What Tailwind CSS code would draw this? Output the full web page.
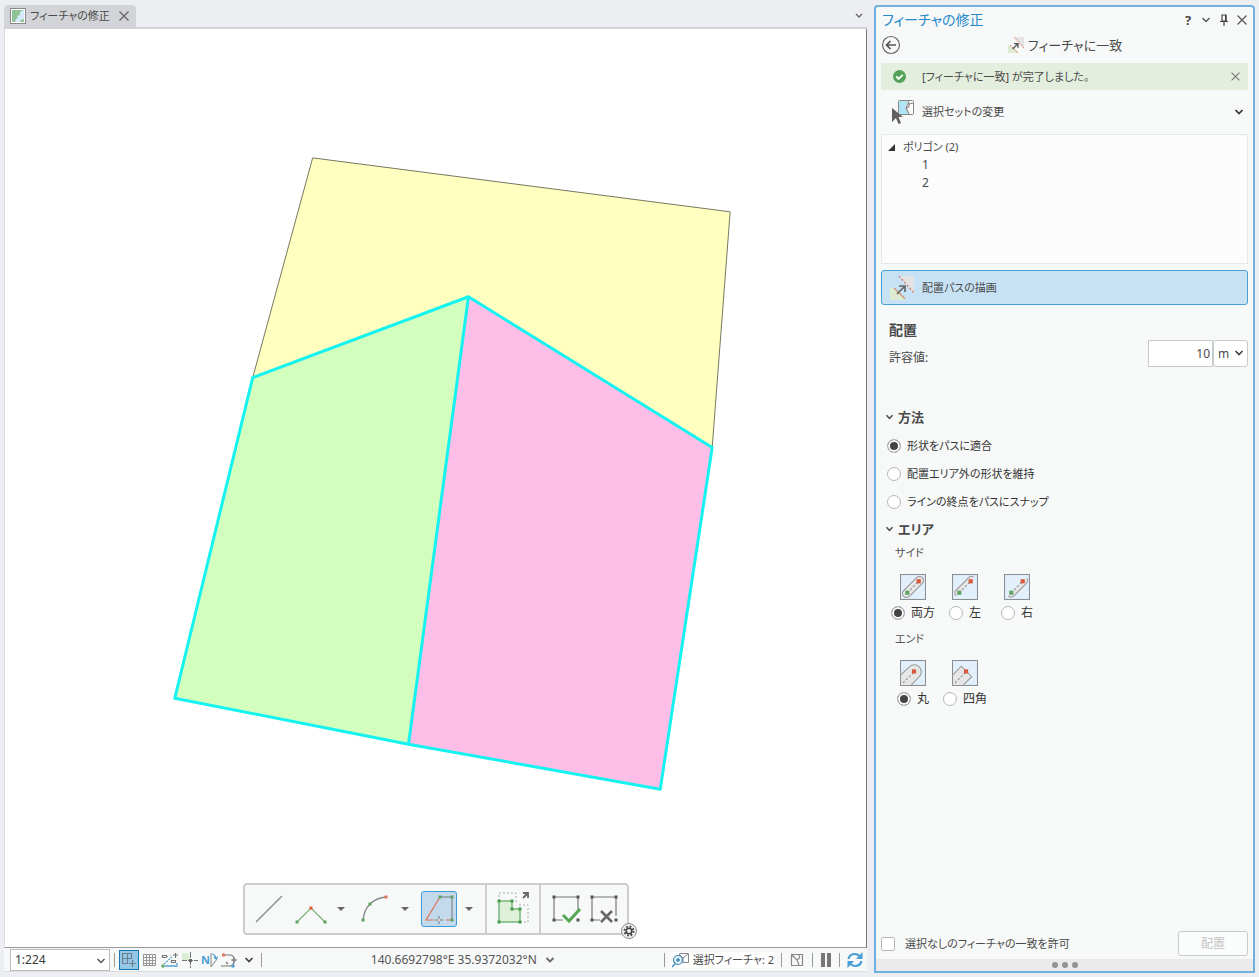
<!DOCTYPE html>
<html lang="ja">
<head>
    <meta charset="UTF-8">
    <meta name="viewport" content="width=device-width, initial-scale=1.0">
    <title>フィーチャの修正</title>
    <script src="https://cdn.jsdelivr.net/npm/@tailwindcss/browser@4"></script>
</head>
<body class="h-screen min-h-[760px] flex gap-[7px] bg-[#edeef1] pl-1 pr-1 pt-[5px] pb-1 overflow-hidden font-['Noto_Sans','Noto_Sans_CJK_JP',sans-serif] [font-feature-settings:'palt'] text-[12px] leading-4 text-[#4a4a4a]">

    <!-- マップビュー -->
    <main class="flex-1 min-w-0 flex flex-col pb-[1px]">
        <div class="h-6 shrink-0 flex items-end justify-between border-b-2 border-[#d2d4d8]">
            <div class="h-full flex items-center gap-1 bg-[#d2d4d8] rounded-t px-[6px]">
                <svg class="size-4" viewBox="0 0 16 16">
                    <rect x=".5" y=".5" width="15" height="15" fill="#fff" stroke="#8a8a8a"/>
                    <path d="M2 2h12v12H2z" fill="#8fc397"/>
                    <path d="M14 2v9l-3 1-1 2H5l1-3 2-1-1-2 3-1 0-3 2-1V2z" fill="#d3eafa"/>
                </svg>
                <span class="text-[11px] leading-4">フィーチャの修正</span>
                <button class="ml-1" aria-label="閉じる">
                    <svg class="size-3" viewBox="0 0 12 12"><path d="M1.500 1.500l9 9M10.500 1.500l-9 9" stroke="#666" stroke-width="1.300"/></svg>
                </button>
            </div>
            <button class="self-center mr-1" aria-label="ビューの一覧">
                <svg class="w-2 h-[6px]" viewBox="0 0 8 6"><path d="M1 1l3 3 3-3" fill="none" stroke="#666" stroke-width="1.300"/></svg>
            </button>
        </div>

        <div class="relative flex-1 min-h-0 bg-white border-l border-l-[#dcdde0] border-r border-r-[#777] border-b border-b-[#999]">
            <svg class="block w-full h-full" viewBox="5 28 862 919">
                <polygon points="313,157 731,211 713,447 469,296 253,377" fill="#ffffc0" stroke="#777760"/>
                <polygon points="469,296 253,377 175,698 409,744" fill="#d2ffbd"/>
                <polygon points="469,296 713,447 661,789 409,744" fill="#ffbee8"/>
                <path d="M469 296L253 377 175 698 409 744 661 789 713 447zL409 744" fill="none" stroke="#16f2f0" stroke-width="3" stroke-linejoin="round"/>
            </svg>

            <!-- 作図ツールバー -->
            <div class="absolute bottom-3 left-1/2 -translate-x-1/2 h-[52px] flex items-center bg-[#f7f9f8] border-2 border-[#cdcdcd] rounded">
                <div class="h-full flex items-center border-r-2 border-[#cdcdcd] pl-2 pr-3">
                    <button class="mr-2" aria-label="ライン">
                        <svg class="size-8" viewBox="0 0 32 32"><path d="M3 29L29 3" stroke="#888" stroke-width="1.200"/></svg>
                    </button>
                    <button class="mr-2" aria-label="頂点">
                        <svg class="w-9 h-8" viewBox="0 0 36 32">
                            <path d="M4 29L18 15 32 29" fill="none" stroke="#79ae79" stroke-width="1.200"/>
                            <path d="M2.500 27.500h3v3h-3zM30.500 27.500h3v3h-3z" fill="#5fa463"/><path d="M16.500 13.500h3v3h-3z" fill="#e8572b"/>
                        </svg>
                    </button>
                    <button class="mr-3" aria-label="頂点のオプション"><svg class="w-2 h-1" viewBox="0 0 8 4"><path d="M0 0h8L4 4z" fill="#666"/></svg></button>
                    <button class="mr-2" aria-label="円弧">
                        <svg class="w-9 h-8" viewBox="0 0 36 32">
                            <path d="M6 27Q7 17 13 11 19 5 29 4" fill="none" stroke="#888" stroke-width="1.300"/>
                            <path d="M4.500 25.500h3v3h-3zM11.500 9.500h3v3h-3z" fill="#5fa463"/><path d="M27.500 2.500h3v3h-3z" fill="#d9775a"/>
                        </svg>
                    </button>
                    <button class="mr-3" aria-label="円弧のオプション"><svg class="w-2 h-1" viewBox="0 0 8 4"><path d="M0 0h8L4 4z" fill="#666"/></svg></button>
                    <button class="mr-2 size-9 flex items-center justify-center bg-[#c3d9ec] border border-[#3f9bd8] rounded-[3px]" aria-label="トレース">
                        <svg class="w-8 h-8" viewBox="0 0 32 32">
                            <path d="M17 4h12v23" fill="none" stroke="#777"/>
                            <path d="M17 4L3 27h8M23 27h5" fill="none" stroke="#d9775a" stroke-width="1.200"/>
                            <path d="M16 23v8M12 27h8" stroke="#777"/><circle cx="16" cy="27" r="1" fill="#fff"/>
                            <path d="M15.500 2.500h3v3h-3zM27.500 2.500h3v3h-3zM27.500 25.500h3v3h-3z" fill="#5fa463"/>
                        </svg>
                    </button>
                    <button aria-label="トレースのオプション"><svg class="w-2 h-1" viewBox="0 0 8 4"><path d="M0 0h8L4 4z" fill="#666"/></svg></button>
                </div>
                <div class="h-full flex items-center border-r-2 border-[#cdcdcd] px-2">
                    <button aria-label="フィーチャの追加">
                        <svg class="w-9 h-9" viewBox="0 0 36 36">
                            <path d="M4 10V2h17v10M24 14h9v17h-8" fill="none" stroke="#aaa" stroke-dasharray="2 2"/>
                            <path d="M4 10h13v8h8v13H4z" fill="#def0d8" stroke="#79b67c" stroke-width="1.500"/>
                            <path d="M2.500 8.500h3v3h-3zM15.500 8.500h3v3h-3zM15.500 16.500h3v3h-3zM23.500 16.500h3v3h-3zM2.500 29.500h3v3h-3zM23.500 29.500h3v3h-3z" fill="#489a4e"/>
                            <path d="M28 7l4-4M28 2h5v5" fill="none" stroke="#666" stroke-width="1.800"/>
                        </svg>
                    </button>
                </div>
                <div class="h-full flex items-center gap-1 pl-2 pr-[6px]">
                    <button aria-label="完了">
                        <svg class="w-9 h-8" viewBox="0 0 36 32">
                            <path d="M14 27H5V4h24v13" fill="none" stroke="#777" stroke-width="1.200"/>
                            <path d="M3.500 2.500h3v3h-3zM27.500 2.500h3v3h-3zM3.500 25.500h3v3h-3zM27.500 25.500h3v3h-3z" fill="#555"/>
                            <path d="M14 22l6 6 11-12" fill="none" stroke="#55a657" stroke-width="3"/>
                        </svg>
                    </button>
                    <button aria-label="クリア">
                        <svg class="w-8 h-8" viewBox="0 0 32 32">
                            <path d="M11 27H3V4h24v19" fill="none" stroke="#777" stroke-width="1.200"/>
                            <path d="M1.500 2.500h3v3h-3zM25.500 2.500h3v3h-3zM1.500 25.500h3v3h-3zM25.500 25.500h3v3h-3z" fill="#555"/>
                            <path d="M12 18l11 11M23 18L12 29" stroke="#666" stroke-width="2.500"/>
                        </svg>
                    </button>
                </div>
                <button class="absolute -right-[10px] -bottom-[6px]" aria-label="設定">
                    <svg class="size-4" viewBox="0 0 16 16">
                        <circle cx="8" cy="8" r="7.500" fill="#f2f2f2" stroke="#888"/>
                        <circle cx="8" cy="8" r="4.500" fill="none" stroke="#444" stroke-width="2" stroke-dasharray="1.800 1.734"/>
                        <circle cx="8" cy="8" r="2.800" fill="none" stroke="#444" stroke-width="1.600"/>
                    </svg>
                </button>
            </div>
        </div>

        <!-- ステータスバー -->
        <div class="h-6 shrink-0 flex items-center justify-between bg-[#f7f9f8] border-b border-[#dcdde0] pl-[6px] pr-1">
            <div class="flex items-center gap-[3px]">
                <div class="relative">
                    <select class="appearance-none block w-[100px] h-[22px] bg-white border border-[#bcbcbc] pl-1 text-[#3a3a3a]" aria-label="縮尺"><option>1:224</option></select>
                    <svg class="absolute right-1 top-2 w-[10px] h-2 pointer-events-none" viewBox="0 0 10 8"><path d="M1.500 2L5 5.500 8.500 2" fill="none" stroke="#555" stroke-width="1.500"/></svg>
                </div>
                <span class="w-px h-[14px] bg-[#999] mx-px"></span>
                <button class="size-5 flex items-center justify-center bg-[#94c8e8] border border-[#1672ac]" aria-label="スナップ">
                    <svg class="size-4" viewBox="0 0 16 16"><path d="M1.500 1.500h5v5h-5zM6.500 1.500h4v5h-4M1.500 6.500v5h5v-5M11.500 8v7M8 11.500h7" fill="none" stroke="#6f7f8c" stroke-width="1.200"/></svg>
                </button>
                <button aria-label="グリッド">
                    <svg class="size-4" viewBox="0 0 16 16"><path d="M1.500 2.500h12v11h-12zM4.500 2v12M7.500 2v12M10.500 2v12M1 5.500h12M1 8.500h12M1 11.500h12" fill="none" stroke="#999"/></svg>
                </button>
                <button aria-label="計測">
                    <svg class="w-[18px] h-4" viewBox="0 0 18 16">
                        <path d="M4 14h12v-3" fill="none" stroke="#57a4d8" stroke-width="1.300"/><path d="M3 12L11 5" stroke="#57a4d8" stroke-width="1.300" stroke-dasharray="2 1"/>
                        <path d="M1.500 3.500h4v2h-4zM10.500 8.500h4v2h-4zM12 3h5M14.500 1v5" fill="none" stroke="#777" stroke-width="1.200"/><path d="M5 6l2-2M9 3h1" stroke="#aaa"/>
                        <circle cx="2" cy="14" r="1.700" fill="#5fa463"/>
                    </svg>
                </button>
                <button aria-label="制約">
                    <svg class="size-4" viewBox="0 0 16 16"><path d="M0 1h7v7H0z" fill="#d9edd3"/><path d="M0 8.500h16" stroke="#777" stroke-dasharray="5 1"/><path d="M8.500 0v16" stroke="#777" stroke-dasharray="6 1"/><path d="M7 7h3v3H7z" fill="#666"/></svg>
                </button>
                <button class="flex items-center" aria-label="北">
                    <span class="text-[11px] leading-4 font-bold text-[#4a9ed6]">N</span>
                    <svg class="w-2 h-4" viewBox="0 0 8 16"><path d="M1 1v14L7 7" fill="none" stroke="#888"/><path d="M2 2q4 1 4 5M4 5l2 2 2-2" fill="none" stroke="#4a9ed6" stroke-width="1.200"/></svg>
                </button>
                <button aria-label="形状の修正">
                    <svg class="size-4" viewBox="0 0 16 16"><path d="M2 3h7q4 0 4 5M0 14h9q4 0 4-6M5 10l2 2" fill="none" stroke="#777" stroke-width="1.200"/><path d="M10 8h6" stroke="#777"/><circle cx="2.500" cy="3" r="1.800" fill="#df7a62"/><path d="M13 5l2 3-2 3-2-3z" fill="#888"/><circle cx="12" cy="14" r="1.800" fill="#57a4d8"/></svg>
                </button>
                <button class="ml-1" aria-label="その他"><svg class="w-[10px] h-2" viewBox="0 0 10 8"><path d="M1.500 2L5 5.500 8.500 2" fill="none" stroke="#444" stroke-width="1.700"/></svg></button>
                <span class="w-px h-[14px] bg-[#999] ml-1"></span>
            </div>
            <button class="flex items-center gap-2 text-[#555]">140.6692798°E 35.9372032°N
                <svg class="w-[10px] h-2" viewBox="0 0 10 8"><path d="M1.500 2L5 5.500 8.500 2" fill="none" stroke="#666" stroke-width="1.800"/></svg>
            </button>
            <div class="flex items-center gap-[7px]">
                <span class="w-px h-[14px] bg-[#999]"></span>
                <button class="flex items-center gap-1 bg-white text-[11px] leading-4">
                    <svg class="w-[17px] h-4" viewBox="0 0 17 16"><path d="M7.500 1.500h9v9h-6M7 2l4 4 5-4M11 6v4" fill="none" stroke="#888"/><circle cx="6" cy="8" r="4.500" fill="#e6f2fa" stroke="#3e86b8" stroke-width="1.200"/><path d="M3 12l-3 3M6 6v4M4 8h4" stroke="#3e86b8" stroke-width="1.500"/></svg>
                    選択フィーチャ: 2
                </button>
                <span class="w-px h-[14px] bg-[#999]"></span>
                <button aria-label="選択の解除"><svg class="size-4" viewBox="0 0 16 16"><path d="M2.500 2.500h11v11h-11zM3 3l5 5M10 3q2 3-2 5l2 5" fill="none" stroke="#888" stroke-width="1.200"/></svg></button>
                <span class="w-px h-[14px] bg-[#999]"></span>
                <button aria-label="描画の一時停止"><svg class="w-3 h-[14px]" viewBox="0 0 12 14"><path d="M1 0h4v14H1zM7 0h4v14H7z" fill="#777"/></svg></button>
                <span class="w-px h-[14px] bg-[#999]"></span>
                <button aria-label="更新"><svg class="size-4" viewBox="0 0 16 16"><path d="M1.500 7q1-5 6.500-5 3 0 5 3M14.500 9q-1 5-6.500 5-3 0-5-3" fill="none" stroke="#4a9ed6" stroke-width="2.200"/><path d="M15.500 0v7H9zM.5 16V9H7z" fill="#4a9ed6"/></svg></button>
            </div>
        </div>
    </main>

    <!-- フィーチャの修正ウィンドウ -->
    <aside class="w-[381px] shrink-0 flex flex-col bg-[#f7f9f8] border-2 border-[#6fb1de] rounded-t">
        <header class="h-[26px] shrink-0 flex items-center justify-between px-[6px]">
            <h1 class="text-[14px] leading-5 text-[#2488cb]">フィーチャの修正</h1>
            <div class="flex items-center gap-2">
                <button class="w-[10px] text-[13px] leading-4 font-bold" aria-label="ヘルプ">?</button>
                <button aria-label="メニュー"><svg class="w-[10px] h-2" viewBox="0 0 10 8"><path d="M1.500 2L5 5.500 8.500 2" fill="none" stroke="#555" stroke-width="1.400"/></svg></button>
                <button aria-label="ピン留め"><svg class="w-[10px] h-3" viewBox="0 0 10 12"><path d="M3 1h4v6H3zM1 7.500h8M5 8v4" fill="none" stroke="#444" stroke-width="1.200"/><path d="M6 1h1.500v6H6z" fill="#444"/></svg></button>
                <button aria-label="閉じる"><svg class="w-[10px] h-3" viewBox="0 0 10 12"><path d="M.5 1.500l9 9M9.500 1.500l-9 9" stroke="#555" stroke-width="1.300"/></svg></button>
            </div>
        </header>

        <div class="h-6 shrink-0 flex items-center pl-[5px] pr-6">
            <button aria-label="戻る"><svg class="size-5" viewBox="0 0 20 20"><circle cx="10" cy="10" r="8.500" fill="none" stroke="#666" stroke-width="1.200"/><path d="M15 10H6M9.500 6L5.500 10l4 4" fill="none" stroke="#555" stroke-width="1.700"/></svg></button>
            <div class="flex-1 flex items-center justify-center gap-1">
                <svg class="size-4" viewBox="0 0 24 24"><path d="M10 0h14v17z" fill="#e3e3e3"/><path d="M0 12h4l12 12H0z" fill="#dcebd2"/><path d="M9 0l15 17M3 12l12 12" fill="none" stroke="#d9806a" stroke-width="1.500" stroke-dasharray="3 1"/><path d="M7 18l8-8M9 10h6v6" fill="none" stroke="#555" stroke-width="2"/></svg>
                <h2 class="text-[13px] leading-5">フィーチャに一致</h2>
            </div>
        </div>

        <div class="flex-1 min-h-0 flex flex-col px-[5px] pt-[6px]">
            <div class="h-[27px] shrink-0 flex items-center bg-[#e3eede] pl-3 pr-2 text-[11px] leading-4">
                <svg class="size-[13px] mr-4" viewBox="0 0 12 12"><circle cx="6" cy="6" r="6" fill="#55a157"/><path d="M3 6l2.200 2.200L9 4.500" fill="none" stroke="#fff" stroke-width="1.700"/></svg>
                <span class="flex-1">[フィーチャに一致] が完了しました。</span>
                <button aria-label="メッセージを閉じる"><svg class="size-[9px]" viewBox="0 0 8 8"><path d="M.5 .5l7 7M7.500 .5l-7 7" stroke="#777"/></svg></button>
            </div>

            <button class="h-11 shrink-0 flex items-center pl-[10px] pr-1 text-left text-[11px] leading-4">
                <svg class="size-6 mr-[7px]" viewBox="0 0 24 24">
                    <rect x="7.500" y=".5" width="15" height="14" rx="1" fill="#fff" stroke="#888"/>
                    <path d="M8 1h9l-3 6 3 7H8z" fill="#b0e5f7"/><path d="M18 1l-3 7 3 6M15 8q4 0 3-4l4-1" fill="none" stroke="#888" stroke-width="1.200"/>
                    <path d="M1 8v14l4-4 2.500 6 2.500-1-2.500-6H12z" fill="#5f5f5f"/>
                </svg>
                <span class="flex-1">選択セットの変更</span>
                <svg class="w-[10px] h-2" viewBox="0 0 10 8"><path d="M1.500 2L5 5.500 8.500 2" fill="none" stroke="#333" stroke-width="1.700"/></svg>
            </button>

            <div class="h-[130px] shrink-0 bg-[#fcfcfc] border border-[#e6e9e9] py-[3px] pl-[6px] leading-[18px]">
                <div class="flex items-center gap-2">
                    <svg class="size-[7px]" viewBox="0 0 7 7"><path d="M0 7h7V0z" fill="#333"/></svg>
                    <span class="text-[11px] leading-[18px]">ポリゴン (2)</span>
                </div>
                <ul class="pl-[34px]">
                    <li>1</li>
                    <li>2</li>
                </ul>
            </div>

            <button class="mt-[6px] h-[35px] shrink-0 flex items-center gap-2 pl-2 bg-[#c8e2f5] border border-[#4a9ed6] rounded-[3px] text-left text-[11px] leading-4">
                <svg class="size-6" viewBox="0 0 24 24"><path d="M10 0h14v17z" fill="#e3e3e3"/><path d="M0 12h4l12 12H0z" fill="#dcebd2"/><path d="M9 0l15 17" fill="none" stroke="#d9806a" stroke-width="1.300" stroke-dasharray="2 2"/><path d="M4 12l11 11" stroke="#cf9573" stroke-width="1.200"/><path d="M7 18l8-8M9 10h6v6" fill="none" stroke="#666" stroke-width="1.700"/></svg>
                配置パスの描画
            </button>

            <h3 class="mt-[15px] pl-2 text-[14px] leading-5 font-bold">配置</h3>
            <div class="flex items-center pl-2">
                <label class="flex-1 pt-[9px]" for="tolerance">許容値:</label>
                <input id="tolerance" type="text" value="10" class="w-[65px] h-[27px] bg-white border border-[#c6caca] px-[2px] text-right">
                <div class="relative">
                    <select class="appearance-none block w-[35px] h-[27px] bg-white border border-[#c6caca] rounded-[3px] pl-1" aria-label="単位"><option>m</option></select>
                    <svg class="absolute right-1 top-[9px] w-[10px] h-2 pointer-events-none" viewBox="0 0 10 8"><path d="M1.500 2L5 5.500 8.500 2" fill="none" stroke="#444" stroke-width="1.700"/></svg>
                </div>
            </div>

            <h3 class="mt-10 pl-1 flex items-center gap-1 text-[13px] leading-5 font-bold">
                <svg class="w-[9px] h-2" viewBox="0 0 10 8"><path d="M1.500 2L5 5.500 8.500 2" fill="none" stroke="#555" stroke-width="1.800"/></svg>方法
            </h3>
            <div class="mt-[5px] pl-[6px] text-[#333] text-[11px] leading-4">
                <label class="h-7 flex items-center gap-[6px]"><input type="radio" name="method" checked class="appearance-none size-[14px] rounded-full bg-white border border-[#b5b8b8] checked:bg-[#444] checked:shadow-[inset_0_0_0_2px_white]">形状をパスに適合</label>
                <label class="h-7 flex items-center gap-[6px]"><input type="radio" name="method" class="appearance-none size-[14px] rounded-full bg-white border border-[#b5b8b8] checked:bg-[#444] checked:shadow-[inset_0_0_0_2px_white]">配置エリア外の形状を維持</label>
                <label class="h-7 flex items-center gap-[6px]"><input type="radio" name="method" class="appearance-none size-[14px] rounded-full bg-white border border-[#b5b8b8] checked:bg-[#444] checked:shadow-[inset_0_0_0_2px_white]">ラインの終点をパスにスナップ</label>
            </div>

            <h3 class="mt-[3px] pl-1 flex items-center gap-1 text-[13px] leading-5 font-bold">
                <svg class="w-[9px] h-2" viewBox="0 0 10 8"><path d="M1.500 2L5 5.500 8.500 2" fill="none" stroke="#555" stroke-width="1.800"/></svg>エリア
            </h3>
            <fieldset class="pl-[6px] text-[#333]">
                <legend class="pt-[6px] pl-2 text-[11px] leading-4 text-[#555]">サイド</legend>
                <div class="mt-[13px] flex">
                    <label class="w-[52px] flex flex-col items-center gap-[5px]">
                        <svg class="size-[26px]" viewBox="0 0 25 25"><rect x=".5" y=".5" width="24" height="24" fill="#e2f0fb" stroke="#8b8f92"/><path d="M3.500 16L16 3.500a3.800 3.800 0 0 1 5.500 5.500L9 21.500A3.800 3.800 0 0 1 3.500 16z" fill="#e6e6e6" stroke="#999"/><path d="M7 18L18 7" stroke="#888" stroke-dasharray="2 2"/><path d="M5 16h4v4H5z" fill="#5fa463"/><path d="M16 5h4v4h-4z" fill="#d8593a"/></svg>
                        <span class="flex items-center gap-[6px] whitespace-nowrap"><input type="radio" name="side" checked class="appearance-none size-[14px] rounded-full bg-white border border-[#b5b8b8] checked:bg-[#444] checked:shadow-[inset_0_0_0_2px_white]">両方</span>
                    </label>
                    <label class="w-[52px] flex flex-col items-center gap-[5px]">
                        <svg class="size-[26px]" viewBox="0 0 25 25"><rect x=".5" y=".5" width="24" height="24" fill="#e2f0fb" stroke="#8b8f92"/><path d="M4 21a4 4 0 0 1-.5-5L16 3.500a4 4 0 0 1 5-.5L18 7 7 18z" fill="#e6e6e6"/><path d="M4 21a4 4 0 0 1-.5-5L16 3.500a4 4 0 0 1 5-.5" fill="none" stroke="#999"/><path d="M7 18L18 7" stroke="#888" stroke-dasharray="2 2"/><path d="M5 16h4v4H5z" fill="#5fa463"/><path d="M16 5h4v4h-4z" fill="#d8593a"/></svg>
                        <span class="flex items-center gap-[6px]"><input type="radio" name="side" class="appearance-none size-[14px] rounded-full bg-white border border-[#b5b8b8] checked:bg-[#444] checked:shadow-[inset_0_0_0_2px_white]">左</span>
                    </label>
                    <label class="w-[52px] flex flex-col items-center gap-[5px]">
                        <svg class="size-[26px]" viewBox="0 0 25 25"><rect x=".5" y=".5" width="24" height="24" fill="#e2f0fb" stroke="#8b8f92"/><path d="M4 21a4 4 0 0 0 5 .5L21.500 9a4 4 0 0 0 .5-5L18 7 7 18z" fill="#e6e6e6"/><path d="M4 21a4 4 0 0 0 5 .5L21.500 9a4 4 0 0 0 .5-5" fill="none" stroke="#999"/><path d="M7 18L18 7" stroke="#888" stroke-dasharray="2 2"/><path d="M5 16h4v4H5z" fill="#5fa463"/><path d="M16 5h4v4h-4z" fill="#d8593a"/></svg>
                        <span class="flex items-center gap-[6px]"><input type="radio" name="side" class="appearance-none size-[14px] rounded-full bg-white border border-[#b5b8b8] checked:bg-[#444] checked:shadow-[inset_0_0_0_2px_white]">右</span>
                    </label>
                </div>
            </fieldset>
            <fieldset class="pl-[6px] text-[#333]">
                <legend class="pt-[10px] pl-2 text-[11px] leading-4 text-[#555]">エンド</legend>
                <div class="mt-[13px] flex">
                    <label class="w-[52px] flex flex-col items-center gap-[5px]">
                        <svg class="size-[26px]" viewBox="0 0 25 25"><rect x=".5" y=".5" width="24" height="24" fill="#e2f0fb" stroke="#8b8f92"/><path d="M1 14L9 6.500a6.500 6.500 0 0 1 9.500 9.500L11 24H1z" fill="#e6e6e6"/><path d="M1 14L9 6.500a6.500 6.500 0 0 1 9.500 9.500L11 24" fill="none" stroke="#999"/><path d="M3 22L13 12" stroke="#888" stroke-dasharray="2 2"/><path d="M11.500 9h4v4h-4z" fill="#d8593a"/></svg>
                        <span class="flex items-center gap-[6px]"><input type="radio" name="end" checked class="appearance-none size-[14px] rounded-full bg-white border border-[#b5b8b8] checked:bg-[#444] checked:shadow-[inset_0_0_0_2px_white]">丸</span>
                    </label>
                    <label class="w-[52px] flex flex-col items-center gap-[5px]">
                        <svg class="size-[26px]" viewBox="0 0 25 25"><rect x=".5" y=".5" width="24" height="24" fill="#e2f0fb" stroke="#8b8f92"/><path d="M1 14l8-8 10 10-8 8H1z" fill="#e6e6e6"/><path d="M1 14l8-8 10 10-8 8" fill="none" stroke="#999"/><path d="M3 22L13 12" stroke="#888" stroke-dasharray="2 2"/><path d="M11.500 9h4v4h-4z" fill="#d8593a"/></svg>
                        <span class="flex items-center gap-[6px] whitespace-nowrap"><input type="radio" name="end" class="appearance-none size-[14px] rounded-full bg-white border border-[#b5b8b8] checked:bg-[#444] checked:shadow-[inset_0_0_0_2px_white]">四角</span>
                    </label>
                </div>
            </fieldset>

            <div class="mt-auto mb-[3px] flex items-center justify-between">
                <label class="flex items-center gap-[10px] text-[11px] leading-4"><input type="checkbox" class="appearance-none size-[14px] bg-white border border-[#b5b8b8] rounded-[2px] checked:bg-[#444]">選択なしのフィーチャの一致を許可</label>
                <button disabled class="w-[70px] h-[25px] bg-[#fbfcfc] border border-[#c6caca] rounded-[3px] text-[#c4c4c4]">配置</button>
            </div>
        </div>

        <div class="h-3 shrink-0 flex items-center justify-center gap-1 bg-[#eaeaea]">
            <span class="size-[6px] rounded-full bg-[#939393]"></span>
            <span class="size-[6px] rounded-full bg-[#939393]"></span>
            <span class="size-[6px] rounded-full bg-[#939393]"></span>
        </div>
    </aside>
</body>
</html>
